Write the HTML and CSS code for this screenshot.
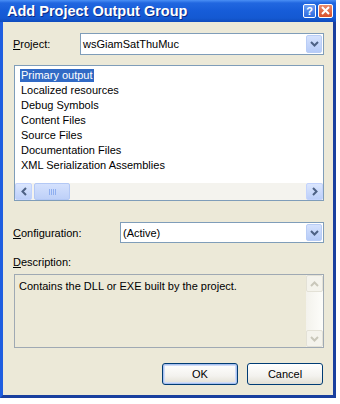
FILE: index.html
```html
<!DOCTYPE html>
<html lang="en">
<head>
    <meta charset="UTF-8">
    <title>Add Project Output Group</title>
    <link rel="stylesheet" href="styles.css">
</head>
<body>

<div class="window">
    <div class="titlebar">
        <span class="title">Add Project Output Group</span>
        <div class="caption-buttons">
            <span class="cap-btn help">?</span>
            <span class="cap-btn close">
                <svg width="9" height="9" viewBox="0 0 9 9"><path d="M1 1 L8 8 M8 1 L1 8" stroke="#fff" stroke-width="2" fill="none"/></svg>
            </span>
        </div>
    </div>

    <div class="frame">
        <div class="field-row project-row">
            <label class="field-label"><u>P</u>roject:</label>
            <div class="combo">
                <span class="combo-text">wsGiamSatThuMuc</span>
                <span class="drop-btn">
                    <svg width="9" height="6" viewBox="0 0 9 6"><path d="M1 1 L4.5 4.5 L8 1" stroke="#4d6185" stroke-width="2" fill="none"/></svg>
                </span>
            </div>
        </div>

        <div class="listbox">
            <ul class="list-items">
                <li class="selected"><span>Primary output</span></li>
                <li><span>Localized resources</span></li>
                <li><span>Debug Symbols</span></li>
                <li><span>Content Files</span></li>
                <li><span>Source Files</span></li>
                <li><span>Documentation Files</span></li>
                <li><span>XML Serialization Assemblies</span></li>
            </ul>
            <div class="hscroll">
                <span class="sb-btn">
                    <svg width="6" height="9" viewBox="0 0 6 9"><path d="M5 1 L1.5 4.5 L5 8" stroke="#4d6185" stroke-width="2" fill="none"/></svg>
                </span>
                <div class="sb-track">
                    <span class="sb-thumb">
                        <svg width="7" height="6" viewBox="0 0 7 6"><path d="M0.5 0 V6 M2.5 0 V6 M4.5 0 V6 M6.5 0 V6" stroke="#8faff0" stroke-width="1"/></svg>
                    </span>
                </div>
                <span class="sb-btn">
                    <svg width="6" height="9" viewBox="0 0 6 9"><path d="M1 1 L4.5 4.5 L1 8" stroke="#4d6185" stroke-width="2" fill="none"/></svg>
                </span>
            </div>
        </div>

        <div class="field-row config-row">
            <label class="field-label"><u>C</u>onfiguration:</label>
            <div class="combo">
                <span class="combo-text">(Active)</span>
                <span class="drop-btn">
                    <svg width="9" height="6" viewBox="0 0 9 6"><path d="M1 1 L4.5 4.5 L8 1" stroke="#4d6185" stroke-width="2" fill="none"/></svg>
                </span>
            </div>
        </div>

        <div class="desc-label"><u>D</u>escription:</div>
        <div class="desc-box">
            <p class="desc-text">Contains the DLL or EXE built by the project.</p>
            <div class="vscroll">
                <span class="sb-btn disabled">
                    <svg width="9" height="6" viewBox="0 0 9 6"><path d="M1 5 L4.5 1.5 L8 5" stroke="#c9c7ba" stroke-width="2" fill="none"/></svg>
                </span>
                <span class="vs-track"></span>
                <span class="sb-btn disabled">
                    <svg width="9" height="6" viewBox="0 0 9 6"><path d="M1 1 L4.5 4.5 L8 1" stroke="#c9c7ba" stroke-width="2" fill="none"/></svg>
                </span>
            </div>
        </div>

        <div class="button-row">
            <button class="xp-btn default">OK</button>
            <button class="xp-btn">Cancel</button>
        </div>
    </div>
</div>

</body>
</html>
```

FILE: styles.css
```css
body {
    margin: 0;
    background: #ffffff;
    font-family: "Liberation Sans", Arial, sans-serif;
    font-size: 11px;
    color: #000;
}
.window {
    width: 336px;
}
.titlebar {
    height: 22px;
    display: flex;
    align-items: center;
    justify-content: space-between;
    padding: 0 3px 0 7px;
    background: linear-gradient(to bottom, #4a8ff5 0, #2167e0 3px, #165cd8 11px, #1459d2 18px, #0f4bbd 22px);
}
.title {
    color: #fff;
    font-weight: bold;
    font-size: 14.5px;
    text-shadow: 1px 1px 0 #0b2a86;
}
.caption-buttons {
    display: flex;
    gap: 2px;
    margin-top: -1px;
}
.cap-btn {
    height: 14px;
    display: flex;
    align-items: center;
    justify-content: center;
    border: 1px solid #fff;
    border-radius: 2px;
    box-sizing: border-box;
    color: #fff;
    font-weight: bold;
    font-size: 11px;
}
.help {
    width: 13px;
    background: linear-gradient(to bottom, #6b9cf3, #2d6be0);
}
.close {
    width: 15px;
    background: linear-gradient(to bottom, #e98a6b, #d9502a);
}

.frame {
    background: #ece9d8;
    border: 3px solid #1f5ee0;
    border-top: 0;
    border-right-color: #193f9e;
    border-bottom-color: #193f9e;
    padding: 11px 9px 10px 11px;
}

/* label + combo rows */
.field-row {
    display: flex;
    align-items: center;
}
.project-row {
    height: 22px;
}
.project-row .field-label {
    width: 66px;
}
.config-row {
    height: 21px;
    margin-top: 21px;
}
.config-row .field-label {
    width: 106px;
}
.field-label {
    margin-left: -1px;
    padding-right: 1px;
}
.combo {
    flex: 1;
    height: 100%;
    box-sizing: border-box;
    border: 1px solid #7f9db9;
    background: #fff;
    display: flex;
    align-items: center;
}
.combo-text {
    padding-left: 2px;
    flex: 1;
}
.drop-btn {
    width: 16px;
    align-self: stretch;
    margin: 1px;
    box-sizing: border-box;
    border: 1px solid #b9cdf6;
    border-radius: 2px;
    background: linear-gradient(to bottom, #d5e2fd, #b6cbf8);
    display: flex;
    align-items: center;
    justify-content: center;
}

/* list box */
.listbox {
    margin-top: 10px;
    height: 136px;
    box-sizing: border-box;
    border: 1px solid #7f9db9;
    background: #fff;
    display: flex;
    flex-direction: column;
}
.list-items {
    flex: 1;
    list-style: none;
    margin: 0;
    padding: 2px 0 0 5px;
}
.list-items li {
    height: 15px;
    display: flex;
    align-items: center;
}
.list-items span {
    padding: 0 1px;
    line-height: 13px;
}
.list-items .selected span {
    background: #316ac5;
    color: #fff;
}
.hscroll {
    height: 17px;
    display: flex;
    background: #f4f3ee;
}
.sb-btn {
    width: 17px;
    height: 17px;
    box-sizing: border-box;
    border: 1px solid #c3d3fd;
    border-radius: 2px;
    background: linear-gradient(to bottom, #dbe6fe, #bccff9);
    display: flex;
    align-items: center;
    justify-content: center;
}
.sb-track {
    flex: 1;
    display: flex;
    align-items: stretch;
}
.sb-thumb {
    width: 36px;
    margin-left: 2px;
    box-sizing: border-box;
    border: 1px solid #b3c8f5;
    border-radius: 2px;
    background: linear-gradient(to bottom, #d4e1fd, #bed0f8);
    display: flex;
    align-items: center;
    justify-content: center;
}

/* description */
.desc-label {
    margin-top: 12px;
    height: 14px;
    line-height: 14px;
    margin-left: -1px;
}
.desc-box {
    margin-top: 5px;
    height: 74px;
    box-sizing: border-box;
    border: 1px solid #9fa9b3;
    background: #ece9d8;
    display: flex;
}
.desc-text {
    flex: 1;
    margin: 0;
    padding: 4px 0 0 4px;
    line-height: 14px;
}
.vscroll {
    width: 17px;
    display: flex;
    flex-direction: column;
    background: linear-gradient(to right, #f3f2ec, #fdfdfa);
}
.vs-track {
    flex: 1;
}
.sb-btn.disabled {
    border-color: #e3e1d6;
    background: #f4f3ec;
}

/* buttons */
.button-row {
    margin-top: 15px;
    display: flex;
    justify-content: flex-end;
    gap: 9px;
    padding-right: 1px;
}
.xp-btn {
    width: 76px;
    height: 22px;
    border: 1px solid #003c74;
    border-radius: 3px;
    background: linear-gradient(to bottom, #ffffff, #f3f2ee 60%, #e2dfd4);
    font-family: "Liberation Sans", Arial, sans-serif;
    font-size: 11px;
    color: #000;
    padding: 0;
}
.xp-btn.default {
    box-shadow: inset 0 0 0 1px #a9c1f0, inset 0 0 0 2px #cfdcf7;
}
```
